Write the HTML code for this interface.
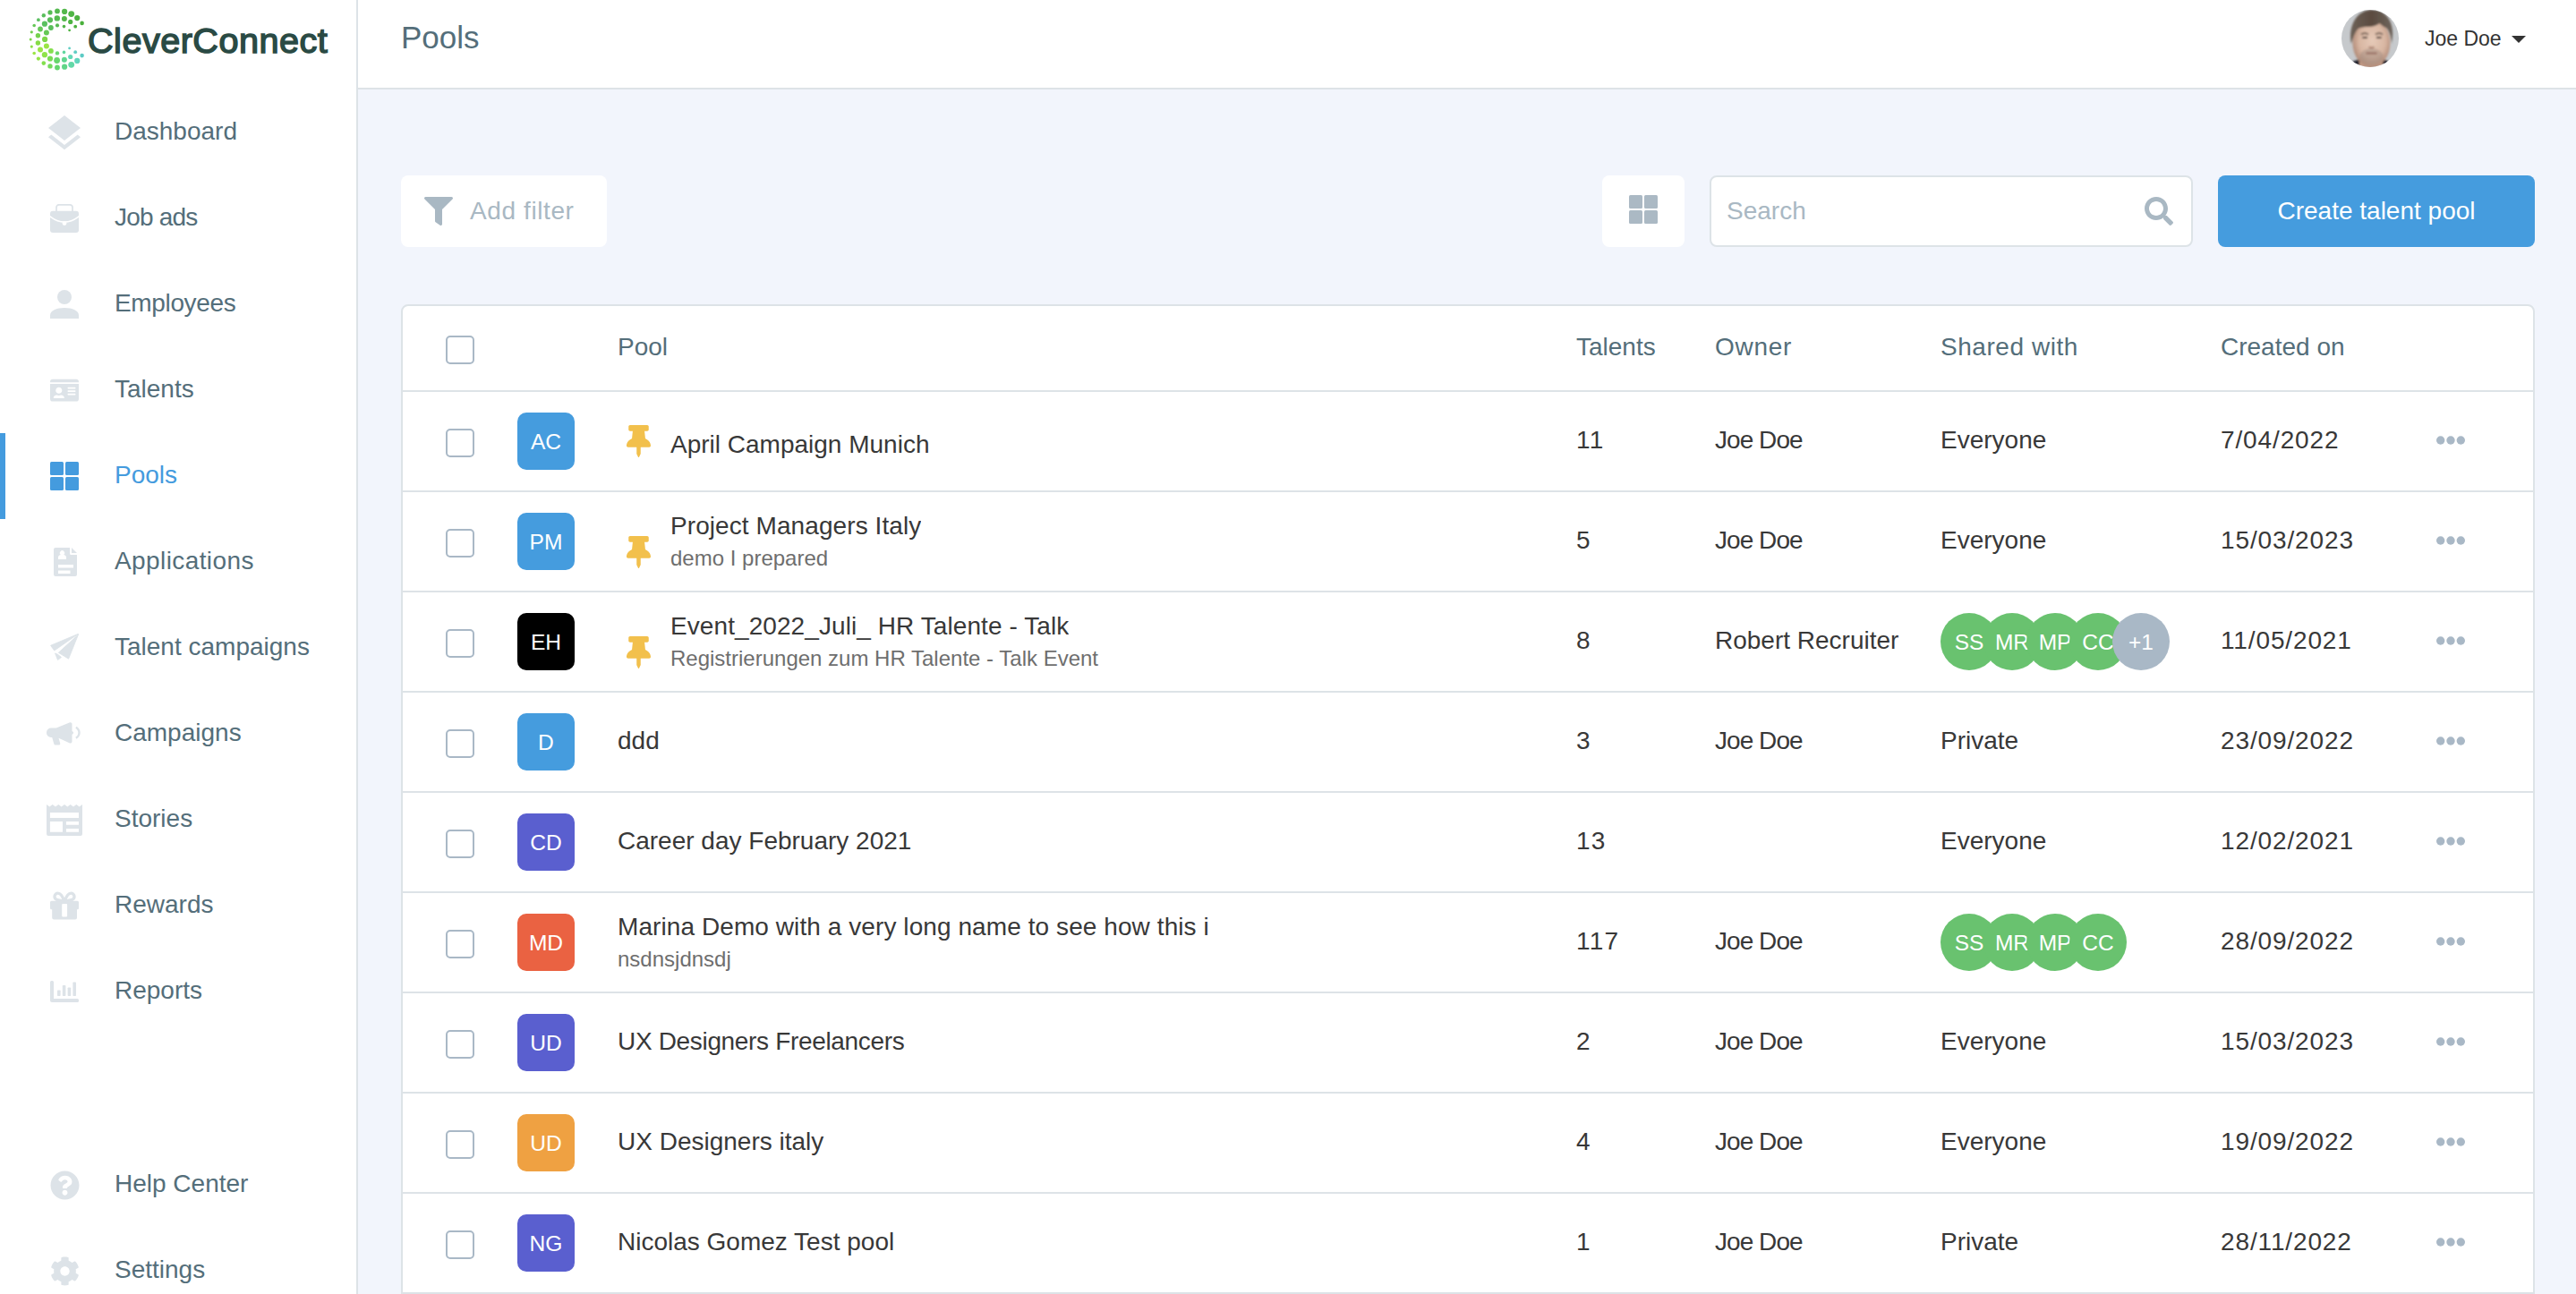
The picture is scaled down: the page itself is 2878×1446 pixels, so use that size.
<!DOCTYPE html>
<html lang="en">
<head>
<meta charset="utf-8">
<title>Pools - CleverConnect</title>
<style>
*{box-sizing:border-box;margin:0;padding:0}
html,body{width:2878px;height:1446px;overflow:hidden;background:#f2f5fc;font-family:"Liberation Sans",Arial,sans-serif;color:#333}
#sidebar{position:absolute;left:0;top:0;width:400px;height:1446px;background:#fff;border-right:2px solid #dde3e7}
#logo{position:absolute;left:0;top:0;width:398px;height:100px}
#logo svg{position:absolute;left:0;top:0}
#logo .wm{position:absolute;left:98px;top:19.5px;font-size:39.6px;line-height:50px;font-weight:400;color:#2a4a44;-webkit-text-stroke:1.5px #2a4a44;letter-spacing:0.5px;white-space:nowrap}
.nav{position:absolute;left:0;width:398px;height:96px;list-style:none}
.nav .ic{position:absolute;left:40px;top:16px;width:64px;height:64px}
.nav .ic svg{position:absolute;fill:#dde3e8}
.nav .lb{position:absolute;left:128px;top:0;line-height:94px;font-size:28px;color:#546e7a;white-space:nowrap}
.nav.on .lb{color:#449bde}
.nav.on .ic svg{fill:#449bde}
.nav.on:before{content:"";position:absolute;left:0;top:0;width:6px;height:96px;background:#449bde}
#top{position:absolute;left:400px;top:0;width:2478px;height:100px;background:#fff;border-bottom:2px solid #dde3e7}
#top h1{position:absolute;left:48px;top:20px;font-size:35px;line-height:44px;font-weight:400;color:#546e7a}
#user{position:absolute;left:2216px;top:11px;height:64px}
#user svg.uav{position:absolute;left:0;top:0}
#user .nm{position:absolute;left:93px;top:14.500px;font-size:23px;line-height:34px;color:#333;white-space:nowrap}
#user .car{position:absolute;left:189.500px;top:29px;width:0;height:0;border-left:8px solid transparent;border-right:8px solid transparent;border-top:8.500px solid #333}
#tools{position:absolute;left:448px;top:196px;width:2384px;height:80px}
.btn{position:absolute;top:0;height:80px;border-radius:8px;background:#fff;font-size:28px;line-height:80px;white-space:nowrap}
#filter{left:0;width:230px;color:#a9b8c3}
#filter svg{position:absolute;left:26px;top:24px;fill:#a9b8c3}
#filter span{position:absolute;left:77px;top:0}
#grid{left:1342px;width:92px}
#grid svg{position:absolute;left:30px;top:22px;fill:#abb9c4}
#search{left:1462px;width:540px;border:2px solid #dde3e7;color:#a9b8c3}
#search span{position:absolute;left:17px;top:-2px}
#filter span{letter-spacing:.6px}
#search svg{position:absolute;left:484px;top:22px;fill:#a9b8c3}
#create{left:2030px;width:354px;background:#459cde;color:#fff;text-align:center}
#card{position:absolute;left:448px;top:340px;width:2384px;height:1140px;background:#fff;border:2px solid #dde3e7;border-radius:8px;overflow:hidden}
.hd{position:relative;height:96px;border-bottom:2px solid #dde3e7;color:#546e7a;font-size:28px;line-height:92px}
.hd span{position:absolute;top:0;white-space:nowrap}
.row{position:relative;height:112px;border-bottom:2px solid #dde3e7;font-size:28px;line-height:108px;color:#383838}
.cb{position:absolute;left:48px;top:41px;width:32px;height:32px;border:2px solid #a9b8c6;border-radius:5px;background:#fff}
.hd .cb{top:33px}
.av{position:absolute;left:128px;top:23px;width:64px;height:64px;border-radius:10px;color:#fff;text-align:center;font-size:24.600px;line-height:66px;background:#459cde}
.c{position:absolute;top:0;white-space:nowrap}
.pin{position:absolute;left:250px;top:37px;fill:#f2c04c}
.two .pin{top:49px}
.nm{left:240px}
.pinned .nm{left:299px}
.pinned.one .nm{top:5px}
.two .nm{top:-16px;max-width:660px;letter-spacing:.08px;overflow:hidden;height:112px}
.sub{position:absolute;left:240px;top:20px;font-size:24px;color:#6e6e6e;white-space:nowrap}
.pinned .sub{left:299px}
.tal{left:1311px;letter-spacing:1.2px}.dt{letter-spacing:.87px}.jd{letter-spacing:-.95px}.own{left:1466px}.sh{left:2029px}.dt{left:2029px}.sh{left:1718px}
.dots{position:absolute;left:2272px;top:49px;fill:#a9b8c6}
.bub{position:absolute;left:1718px;top:23px;height:64px}
.bub b{position:absolute;top:0;width:64px;height:64px;border-radius:50%;background:#69c26f;color:#fff;font-weight:400;font-size:24.500px;line-height:66px;text-align:center}
.bub b.more{background:#a9b8c6}
@media (max-width:1600px){html{zoom:.5}}
</style>
</head>
<body>
<div id="sidebar">
<div id="logo">
<svg width="398" height="100" viewBox="0 0 398 100">
<circle cx="91.6" cy="25.9" r="2.3" fill="#4ab03c"/>
<circle cx="86.2" cy="20.1" r="3.1" fill="#4db241"/>
<circle cx="79.7" cy="15.6" r="3.4" fill="#50b546"/>
<circle cx="72.1" cy="12.9" r="3.1" fill="#53b74b"/>
<circle cx="64.0" cy="12.4" r="2.9" fill="#55b950"/>
<circle cx="56.0" cy="13.9" r="2.6" fill="#57bc55"/>
<circle cx="48.8" cy="17.3" r="2.2" fill="#59be5b"/>
<circle cx="42.9" cy="22.2" r="1.9" fill="#5bc060"/>
<circle cx="38.2" cy="28.5" r="1.8" fill="#66c758"/>
<circle cx="35.3" cy="35.8" r="1.6" fill="#71cf50"/>
<circle cx="34.2" cy="43.9" r="1.5" fill="#7cd648"/>
<circle cx="35.3" cy="52.1" r="1.6" fill="#8cde46"/>
<circle cx="38.2" cy="59.5" r="1.8" fill="#9be545"/>
<circle cx="42.9" cy="65.6" r="2.1" fill="#94e448"/>
<circle cx="48.8" cy="70.6" r="2.3" fill="#82df4d"/>
<circle cx="56.0" cy="73.9" r="2.7" fill="#73da5a"/>
<circle cx="64.0" cy="75.5" r="2.9" fill="#66d66e"/>
<circle cx="72.1" cy="74.7" r="3.1" fill="#60d588"/>
<circle cx="79.7" cy="72.3" r="3.4" fill="#62d8a7"/>
<circle cx="86.2" cy="67.9" r="3.1" fill="#61d5bc"/>
<circle cx="91.6" cy="62.1" r="2.3" fill="#5dcbc5"/>
<circle cx="84.2" cy="29.7" r="1.9" fill="#4ab03d"/>
<circle cx="78.7" cy="24.4" r="2.6" fill="#4eb343"/>
<circle cx="71.9" cy="21.1" r="3.0" fill="#52b649"/>
<circle cx="63.8" cy="20.4" r="3.2" fill="#55ba50"/>
<circle cx="56.0" cy="22.3" r="3.1" fill="#58bd58"/>
<circle cx="49.9" cy="26.7" r="3.1" fill="#5ac05f"/>
<circle cx="45.0" cy="32.5" r="2.9" fill="#66c858"/>
<circle cx="42.4" cy="39.8" r="2.7" fill="#74d14d"/>
<circle cx="42.4" cy="48.0" r="2.7" fill="#86db47"/>
<circle cx="45.0" cy="55.4" r="3.0" fill="#9ae545"/>
<circle cx="49.9" cy="61.2" r="3.1" fill="#8fe349"/>
<circle cx="56.0" cy="65.5" r="3.1" fill="#78db53"/>
<circle cx="63.6" cy="67.5" r="3.4" fill="#67d66c"/>
<circle cx="71.9" cy="66.8" r="3.0" fill="#60d690"/>
<circle cx="78.7" cy="63.5" r="2.6" fill="#63d9b7"/>
<circle cx="84.2" cy="58.2" r="1.9" fill="#5ecdc3"/>
<circle cx="77.6" cy="33.8" r="1.4" fill="#4bb13d"/>
<circle cx="71.5" cy="29.6" r="1.8" fill="#50b547"/>
<circle cx="64.0" cy="28.4" r="2.1" fill="#56ba51"/>
<circle cx="56.9" cy="31.0" r="2.9" fill="#59be5b"/>
<circle cx="51.9" cy="36.5" r="3.0" fill="#66c857"/>
<circle cx="50.1" cy="43.9" r="3.1" fill="#7cd648"/>
<circle cx="51.9" cy="51.4" r="3.0" fill="#9ae545"/>
<circle cx="56.9" cy="56.9" r="2.9" fill="#84df4d"/>
<circle cx="64.0" cy="59.4" r="2.2" fill="#68d76b"/>
<circle cx="71.5" cy="58.4" r="1.8" fill="#61d79f"/>
<circle cx="77.6" cy="53.9" r="1.4" fill="#5fcec2"/>
</svg>
<div class="wm">CleverConnect</div>
</div>
<ul>
<li class="nav" style="top:100px"><div class="ic"><svg style="left:8px;top:8.5px" width="48" height="48" viewBox="0 0 24 24"><path d="M11.99 18.54l-7.37-5.73L3 14.07l9 7 9-7-1.63-1.27-7.38 5.74zM12 16l7.36-5.73L21 9l-9-7-9 7 1.63 1.27L12 16z"/></svg></div><div class="lb">Dashboard</div></li>
<li class="nav" style="top:196px"><div class="ic"><svg style="left:16px;top:16px" width="32" height="32" viewBox="0 0 32 32"><rect x="7" y=".800" width="18" height="10" rx="3" fill="none" stroke="#dde3e8" stroke-width="1.700"/><rect x="0" y="7.800" width="32" height="24.200" rx="3"/><path d="M-.500 13.600Q16 26.600 32.500 13.600" fill="none" stroke="#fff" stroke-width="1.700"/><circle cx="16" cy="21.600" r="2.400" fill="#fff"/></svg></div><div class="lb" style="letter-spacing:-.8px">Job ads</div></li>
<li class="nav" style="top:292px"><div class="ic"><svg style="left:16px;top:16px" width="32" height="32" viewBox="0 0 32 32"><circle cx="16" cy="8" r="8"/><path d="M0 32v-3.500C0 23 7 20 16 20s16 3 16 8.500V32z"/></svg></div><div class="lb" style="letter-spacing:-.35px">Employees</div></li>
<li class="nav" style="top:388px"><div class="ic"><svg style="left:16px;top:18px" width="32" height="28.4" viewBox="0 0 576 512"><path d="M528 32H48C21.5 32 0 53.5 0 80v16h576V80c0-26.5-21.500-48-48-48zM0 432c0 26.500 21.500 48 48 48h480c26.500 0 48-21.500 48-48V128H0v304zm352-232c0-4.400 3.600-8 8-8h144c4.400 0 8 3.600 8 8v16c0 4.400-3.600 8-8 8H360c-4.400 0-8-3.600-8-8v-16zm0 64c0-4.400 3.600-8 8-8h144c4.400 0 8 3.600 8 8v16c0 4.400-3.600 8-8 8H360c-4.400 0-8-3.600-8-8v-16zm0 64c0-4.400 3.600-8 8-8h144c4.400 0 8 3.600 8 8v16c0 4.400-3.600 8-8 8H360c-4.400 0-8-3.600-8-8v-16zM176 192c35.300 0 64 28.700 64 64s-28.700 64-64 64-64-28.700-64-64 28.700-64 64-64zM67.100 396.200C75.500 370.500 99.600 352 128 352h8.200c12.300 5.100 25.700 8 39.800 8s27.600-2.900 39.800-8h8.200c28.400 0 52.500 18.500 60.900 44.200 3.200 9.900-5.200 19.800-15.600 19.800H82.700c-10.400 0-18.800-10-15.600-19.800z"/></svg></div><div class="lb">Talents</div></li>
<li class="nav on" style="top:484px"><div class="ic"><svg style="left:16px;top:16px" width="32" height="32" viewBox="0 0 32 32"><rect x="0" y="0" width="15" height="15" rx="1.5"/><rect x="17" y="0" width="15" height="15" rx="1.5"/><rect x="0" y="17" width="15" height="15" rx="1.5"/><rect x="17" y="17" width="15" height="15" rx="1.5"/></svg></div><div class="lb">Pools</div></li>
<li class="nav" style="top:580px"><div class="ic"><svg style="left:20px;top:16px" width="26" height="32" viewBox="0 0 26 32"><path fill-rule="evenodd" d="M2 0h16v6.500a1.500 1.500 0 0 0 1.500 1.500H26v22a2 2 0 0 1-2 2H2a2 2 0 0 1-2-2V2a2 2 0 0 1 2-2zm18 0l6 6h-6zM5 3.500v9.500h9v-2.200c0-1.600-1.500-2.600-3-2.800a2.600 2.600 0 1 0-3 0c-1.500.2-3 1.200-3 2.800zM5 19v3.400h17V19zm0 6.600V29h13.500v-3.400z"/></svg></div><div class="lb" style="letter-spacing:.4px">Applications</div></li>
<li class="nav" style="top:676px"><div class="ic"><svg style="left:16px;top:16px" width="32" height="30" viewBox="0 0 32 30"><path d="M31.600.300L.600 13.300 4.700 19z M31.500 1L20.600 28.200 9.400 21.300z M5.600 22l2.900 7.500 4-3-4-3.200z" stroke="#dde3e8" stroke-width=".900" stroke-linejoin="round"/></svg></div><div class="lb">Talent campaigns</div></li>
<li class="nav" style="top:772px"><div class="ic"><svg style="left:12px;top:19px" width="38" height="27" viewBox="0 0 38 27"><path d="M25.500.500C26.800-.300 28.500.500 28.500 2v7.900a2 2 0 0 1 0 3.900v7.900c0 1.500-1.700 2.300-3 1.500l-12-5.500 1.700 5.800c.3 1.100-.5 2.100-1.600 2.100H10c-.8 0-1.500-.5-1.700-1.300L6.200 17H5a5 5 0 0 1-5-5v-.400a5 5 0 0 1 5-5h5.800z"/><path d="M33.400 4.800c2.700 1.500 4.300 4 4.300 7s-1.600 5.500-4.300 7l-1.100-2c1.900-1.100 3-2.900 3-5s-1.100-3.900-3-5z"/></svg></div><div class="lb">Campaigns</div></li>
<li class="nav" style="top:868px"><div class="ic"><svg style="left:12px;top:14px" width="40" height="36" viewBox="0 0 40 36"><path fill-rule="evenodd" d="M0 .900l3.330 2.600 3.340-2.600 3.330 2.600 3.330-2.600 3.340 2.600 3.330-2.600 3.330 2.600 3.340-2.600 3.330 2.600 3.330-2.600 3.340 2.600L40 .900V34a2 2 0 0 1-2 2H2a2 2 0 0 1-2-2zM3.900 10.100V16H36v-5.900zM3.900 20v11.800H18V20zM21.900 20v3.700H36V20zM21.900 27.900v3.900H36v-3.900z"/></svg></div><div class="lb">Stories</div></li>
<li class="nav" style="top:964px"><div class="ic"><svg style="left:16px;top:16px" width="32" height="32" viewBox="0 0 32 32"><path fill-rule="evenodd" d="M1.500 10.800h29a1.500 1.500 0 0 1 1.500 1.500v6.400a1.500 1.500 0 0 1-1.500 1.500H30v9.300a2 2 0 0 1-2 2H4.200a2 2 0 0 1-2-2v-9.300H1.500A1.500 1.500 0 0 1 0 18.700v-6.400a1.500 1.500 0 0 1 1.500-1.500zM14.200 14a1 1 0 0 0-1 1v12.400a1 1 0 0 0 1 1h3.900a1 1 0 0 0 1-1V15a1 1 0 0 0-1-1z"/><path d="M16 11.500C13.500 4.500 11 2.200 8.800 2.200a3.700 3.700 0 0 0-.3 7.400c2 .3 5 .8 7.500 1.900zm0 0c2.500-7 5-9.300 7.200-9.300a3.700 3.700 0 0 1 .3 7.400c-2 .3-5 .8-7.500 1.900z" fill="none" stroke="#dde3e8" stroke-width="3.300" stroke-linejoin="round"/></svg></div><div class="lb">Rewards</div></li>
<li class="nav" style="top:1060px"><div class="ic"><svg style="left:16px;top:20px" width="32" height="24" viewBox="0 0 32 24"><path d="M1.500 0h1A1.500 1.500 0 0 1 4 1.500V20h26.500a1.500 1.500 0 0 1 1.500 1.500v1a1.500 1.500 0 0 1-1.500 1.500H2a2 2 0 0 1-2-2V1.500A1.500 1.500 0 0 1 1.500 0z"/><rect x="8" y="10.500" width="3.600" height="6.500" rx=".8"/><rect x="13.800" y="5" width="3.600" height="12" rx=".8"/><rect x="19.600" y="7.500" width="3.600" height="9.500" rx=".8"/><rect x="25.400" y="1.500" width="3.600" height="15.500" rx=".8"/></svg></div><div class="lb">Reports</div></li>
<li class="nav" style="top:1276px"><div class="ic"><svg style="left:15.500px;top:15.500px" width="33" height="33" viewBox="0 0 512 512"><path d="M504 256c0 136.997-111.043 248-248 248S8 392.997 8 256C8 119.083 119.043 8 256 8s248 111.083 248 248zM262.655 90c-54.497 0-89.255 22.957-116.549 63.758-3.536 5.286-2.353 12.415 2.715 16.258l34.699 26.310c5.205 3.947 12.621 3.008 16.665-2.122 17.864-22.658 30.113-35.797 57.303-35.797 20.429 0 45.698 13.148 45.698 32.958 0 14.976-12.363 22.667-32.534 33.976C247.128 238.528 216 254.941 216 296v4c0 6.627 5.373 12 12 12h56c6.627 0 12-5.373 12-12v-1.333c0-28.462 83.186-29.647 83.186-106.667 0-58.002-60.165-102-116.531-102zM256 338c-25.365 0-46 20.635-46 46 0 25.364 20.635 46 46 46s46-20.636 46-46c0-25.365-20.635-46-46-46z"/></svg></div><div class="lb">Help Center</div></li>
<li class="nav" style="top:1372px"><div class="ic"><svg style="left:15.500px;top:15.500px" width="33" height="33" viewBox="0 0 512 512"><path d="M487.400 315.700l-42.600-24.600c4.300-23.200 4.300-47 0-70.200l42.600-24.600c4.900-2.800 7.100-8.600 5.500-14-11.100-35.600-30-67.800-54.700-94.600-3.800-4.100-10-5.100-14.800-2.300L380.800 110c-17.900-15.400-38.500-27.300-60.800-35.100V25.800c0-5.600-3.900-10.500-9.400-11.700-36.700-8.200-74.300-7.800-109.200 0-5.500 1.200-9.400 6.100-9.400 11.700V75c-22.200 7.900-42.800 19.800-60.800 35.100L88.700 85.500c-4.900-2.800-11-1.900-14.800 2.300-24.700 26.700-43.600 58.900-54.700 94.600-1.700 5.400.6 11.200 5.500 14L67.300 221c-4.300 23.200-4.300 47 0 70.200l-42.600 24.600c-4.900 2.800-7.100 8.600-5.500 14 11.100 35.600 30 67.800 54.700 94.600 3.800 4.100 10 5.100 14.800 2.300l42.600-24.600c17.900 15.400 38.500 27.300 60.800 35.100v49.200c0 5.600 3.900 10.500 9.400 11.700 36.700 8.200 74.300 7.800 109.200 0 5.500-1.200 9.400-6.100 9.400-11.700v-49.200c22.200-7.900 42.800-19.800 60.800-35.100l42.600 24.600c4.900 2.800 11 1.900 14.800-2.300 24.700-26.700 43.600-58.900 54.700-94.600 1.500-5.500-.7-11.300-5.600-14.100zM256 336c-44.100 0-80-35.900-80-80s35.900-80 80-80 80 35.900 80 80-35.900 80-80 80z"/></svg></div><div class="lb">Settings</div></li>
</ul>
</div>
<div id="top">
<h1>Pools</h1>
<div id="user">
<svg class="uav" width="64" height="64" viewBox="0 0 64 64">
<defs><clipPath id="avc"><circle cx="32" cy="32" r="32"/></clipPath><filter id="avb" x="-10%" y="-10%" width="120%" height="120%"><feGaussianBlur stdDeviation="0.900"/></filter>
<radialGradient id="avs" cx="52%" cy="45%" r="58%"><stop offset="0" stop-color="#e6cab8"/><stop offset=".6" stop-color="#d8b6a2"/><stop offset="1" stop-color="#a9826f"/></radialGradient>
<linearGradient id="avh" x1="0" y1="0" x2="1" y2="0"><stop offset="0" stop-color="#6d6157"/><stop offset=".5" stop-color="#5a4b40"/><stop offset="1" stop-color="#6f655c"/></linearGradient></defs>
<g clip-path="url(#avc)"><rect width="64" height="64" fill="#c6c9cc"/>
<g filter="url(#avb)">
<path d="M6 66l4-7 12-5h22l12 5 4 7z" fill="#20242e"/>
<path d="M20 50h26v16H20z" fill="#c39c88"/>
<ellipse cx="33.500" cy="37" rx="21" ry="27" fill="url(#avs)"/>
<path d="M11 38C7 18 17 0 34 0s27 16 22 38c-.5-8-2.500-14-5.500-17.500-3-1.500-6-3.500-8-5.500-3 2.500-8 4-13 4-4 0-8 .5-11 2-3 3.500-5.500 9-7.500 17z" fill="url(#avh)"/>
<ellipse cx="33.500" cy="52" rx="13" ry="9" fill="#9d8a7e" opacity=".45"/>
<path d="M22 27.500c2.200-1.600 5.500-1.600 8 0M38 27.500c2.500-1.600 5.800-1.600 8 0" stroke="#5c4b40" stroke-width="1.700" fill="none"/>
<path d="M23.500 31h5.500M39 31h5.500" stroke="#3c2f2a" stroke-width="1.800" fill="none"/>
<path d="M30.500 41.500c1.800 1 4.200 1 6 0" stroke="#a67a68" stroke-width="1.600" fill="none"/>
<path d="M27.500 48.500h12" stroke="#8e6055" stroke-width="1.700"/>
</g></g></svg>
<div class="nm">Joe Doe</div>
<div class="car"></div>
</div>
</div>
<div id="tools">
<div class="btn" id="filter"><svg width="32" height="32" viewBox="0 0 512 512"><path d="M487.976 0H24.028C2.710 0-8.047 25.866 7.058 40.971L192 225.941V432c0 7.831 3.821 15.170 10.237 19.662l80 55.980C298.020 518.690 320 507.493 320 487.980V225.941l184.947-184.970C520.021 25.896 509.338 0 487.976 0z"/></svg><span>Add filter</span></div>
<div class="btn" id="grid"><svg width="32" height="32" viewBox="0 0 32 32"><rect x="0" y="0" width="15" height="15" rx="1.500"/><rect x="17" y="0" width="15" height="15" rx="1.500"/><rect x="0" y="17" width="15" height="15" rx="1.500"/><rect x="17" y="17" width="15" height="15" rx="1.500"/></svg></div>
<div class="btn" id="search"><span>Search</span><svg width="32" height="32" viewBox="0 0 512 512"><path d="M505 442.700L405.300 343c-4.500-4.500-10.600-7-17-7H372c27.600-35.300 44-79.700 44-128C416 93.100 322.900 0 208 0S0 93.100 0 208s93.100 208 208 208c48.300 0 92.700-16.400 128-44v16.300c0 6.400 2.500 12.500 7 17l99.700 99.700c9.400 9.400 24.600 9.400 33.900 0l28.300-28.300c9.400-9.400 9.400-24.600.1-34zM208 336c-70.700 0-128-57.200-128-128 0-70.700 57.200-128 128-128 70.700 0 128 57.200 128 128 0 70.700-57.200 128-128 128z"/></svg></div>
<div class="btn" id="create">Create talent pool</div>
</div>
<div id="card">
<div class="hd"><div class="cb"></div><span style="left:240px">Pool</span><span style="left:1311px">Talents</span><span style="left:1466px;letter-spacing:.7px">Owner</span><span style="left:1718px;letter-spacing:.55px">Shared with</span><span style="left:2031px">Created on</span></div>
<div class="row one pinned"><div class="cb"></div><div class="av" style="background:#459cde">AC</div><svg class="pin" width="27" height="36" viewBox="0 0 384 512"><path d="M298.028 214.267L285.793 96H328c13.255 0 24-10.745 24-24V24c0-13.255-10.745-24-24-24H56C42.745 0 32 10.745 32 24v48c0 13.255 10.745 24 24 24h42.207L85.972 214.267C37.465 236.820 0 277.261 0 328c0 13.255 10.745 24 24 24h136v104.007c0 1.242.289 2.467.845 3.578l24 48c2.941 5.882 11.364 5.893 14.311 0l24-48a8.008 8.008 0 0 0 .845-3.578V352h136c13.255 0 24-10.745 24-24 0-51.183-37.983-91.427-85.972-113.733z"/></svg><div class="c nm">April Campaign Munich</div><div class="c tal">11</div><div class="c own jd">Joe Doe</div><div class="c sh">Everyone</div><div class="c dt" style="left:2031px">7/04/2022</div><svg class="dots" width="32" height="10" viewBox="0 0 32 10"><circle cx="4.700" cy="5" r="4.700"/><circle cx="16" cy="5" r="4.700"/><circle cx="27.300" cy="5" r="4.700"/></svg></div>
<div class="row two pinned"><div class="cb"></div><div class="av" style="background:#459cde">PM</div><svg class="pin" width="27" height="36" viewBox="0 0 384 512"><path d="M298.028 214.267L285.793 96H328c13.255 0 24-10.745 24-24V24c0-13.255-10.745-24-24-24H56C42.745 0 32 10.745 32 24v48c0 13.255 10.745 24 24 24h42.207L85.972 214.267C37.465 236.820 0 277.261 0 328c0 13.255 10.745 24 24 24h136v104.007c0 1.242.289 2.467.845 3.578l24 48c2.941 5.882 11.364 5.893 14.311 0l24-48a8.008 8.008 0 0 0 .845-3.578V352h136c13.255 0 24-10.745 24-24 0-51.183-37.983-91.427-85.972-113.733z"/></svg><div class="c nm">Project Managers Italy</div><div class="sub">demo I prepared</div><div class="c tal">5</div><div class="c own jd">Joe Doe</div><div class="c sh">Everyone</div><div class="c dt" style="left:2031px">15/03/2023</div><svg class="dots" width="32" height="10" viewBox="0 0 32 10"><circle cx="4.700" cy="5" r="4.700"/><circle cx="16" cy="5" r="4.700"/><circle cx="27.300" cy="5" r="4.700"/></svg></div>
<div class="row two pinned"><div class="cb"></div><div class="av" style="background:#000000">EH</div><svg class="pin" width="27" height="36" viewBox="0 0 384 512"><path d="M298.028 214.267L285.793 96H328c13.255 0 24-10.745 24-24V24c0-13.255-10.745-24-24-24H56C42.745 0 32 10.745 32 24v48c0 13.255 10.745 24 24 24h42.207L85.972 214.267C37.465 236.820 0 277.261 0 328c0 13.255 10.745 24 24 24h136v104.007c0 1.242.289 2.467.845 3.578l24 48c2.941 5.882 11.364 5.893 14.311 0l24-48a8.008 8.008 0 0 0 .845-3.578V352h136c13.255 0 24-10.745 24-24 0-51.183-37.983-91.427-85.972-113.733z"/></svg><div class="c nm">Event_2022_Juli_ HR Talente - Talk</div><div class="sub">Registrierungen zum HR Talente - Talk Event</div><div class="c tal">8</div><div class="c own">Robert Recruiter</div><div class="bub"><b style="left:0px">SS</b><b style="left:48px">MR</b><b style="left:96px">MP</b><b style="left:144px">CC</b><b class="more" style="left:192px">+1</b></div><div class="c dt" style="left:2031px">11/05/2021</div><svg class="dots" width="32" height="10" viewBox="0 0 32 10"><circle cx="4.700" cy="5" r="4.700"/><circle cx="16" cy="5" r="4.700"/><circle cx="27.300" cy="5" r="4.700"/></svg></div>
<div class="row one"><div class="cb"></div><div class="av" style="background:#459cde">D</div><div class="c nm">ddd</div><div class="c tal">3</div><div class="c own jd">Joe Doe</div><div class="c sh">Private</div><div class="c dt" style="left:2031px">23/09/2022</div><svg class="dots" width="32" height="10" viewBox="0 0 32 10"><circle cx="4.700" cy="5" r="4.700"/><circle cx="16" cy="5" r="4.700"/><circle cx="27.300" cy="5" r="4.700"/></svg></div>
<div class="row one"><div class="cb"></div><div class="av" style="background:#5a5fcf">CD</div><div class="c nm">Career day February 2021</div><div class="c tal">13</div><div class="c own"></div><div class="c sh">Everyone</div><div class="c dt" style="left:2031px">12/02/2021</div><svg class="dots" width="32" height="10" viewBox="0 0 32 10"><circle cx="4.700" cy="5" r="4.700"/><circle cx="16" cy="5" r="4.700"/><circle cx="27.300" cy="5" r="4.700"/></svg></div>
<div class="row two"><div class="cb"></div><div class="av" style="background:#ea6242">MD</div><div class="c nm">Marina Demo with a very long name to see how this i</div><div class="sub">nsdnsjdnsdj</div><div class="c tal">117</div><div class="c own jd">Joe Doe</div><div class="bub"><b style="left:0px">SS</b><b style="left:48px">MR</b><b style="left:96px">MP</b><b style="left:144px">CC</b></div><div class="c dt" style="left:2031px">28/09/2022</div><svg class="dots" width="32" height="10" viewBox="0 0 32 10"><circle cx="4.700" cy="5" r="4.700"/><circle cx="16" cy="5" r="4.700"/><circle cx="27.300" cy="5" r="4.700"/></svg></div>
<div class="row one"><div class="cb"></div><div class="av" style="background:#5a5fcf">UD</div><div class="c nm"><span style="letter-spacing:-.33px">UX Designers Freelancers</span></div><div class="c tal">2</div><div class="c own jd">Joe Doe</div><div class="c sh">Everyone</div><div class="c dt" style="left:2031px">15/03/2023</div><svg class="dots" width="32" height="10" viewBox="0 0 32 10"><circle cx="4.700" cy="5" r="4.700"/><circle cx="16" cy="5" r="4.700"/><circle cx="27.300" cy="5" r="4.700"/></svg></div>
<div class="row one"><div class="cb"></div><div class="av" style="background:#efa142">UD</div><div class="c nm">UX Designers italy</div><div class="c tal">4</div><div class="c own jd">Joe Doe</div><div class="c sh">Everyone</div><div class="c dt" style="left:2031px">19/09/2022</div><svg class="dots" width="32" height="10" viewBox="0 0 32 10"><circle cx="4.700" cy="5" r="4.700"/><circle cx="16" cy="5" r="4.700"/><circle cx="27.300" cy="5" r="4.700"/></svg></div>
<div class="row one"><div class="cb"></div><div class="av" style="background:#5a5fcf">NG</div><div class="c nm">Nicolas Gomez Test pool</div><div class="c tal">1</div><div class="c own jd">Joe Doe</div><div class="c sh">Private</div><div class="c dt" style="left:2031px">28/11/2022</div><svg class="dots" width="32" height="10" viewBox="0 0 32 10"><circle cx="4.700" cy="5" r="4.700"/><circle cx="16" cy="5" r="4.700"/><circle cx="27.300" cy="5" r="4.700"/></svg></div>
</div>
</body></html>
